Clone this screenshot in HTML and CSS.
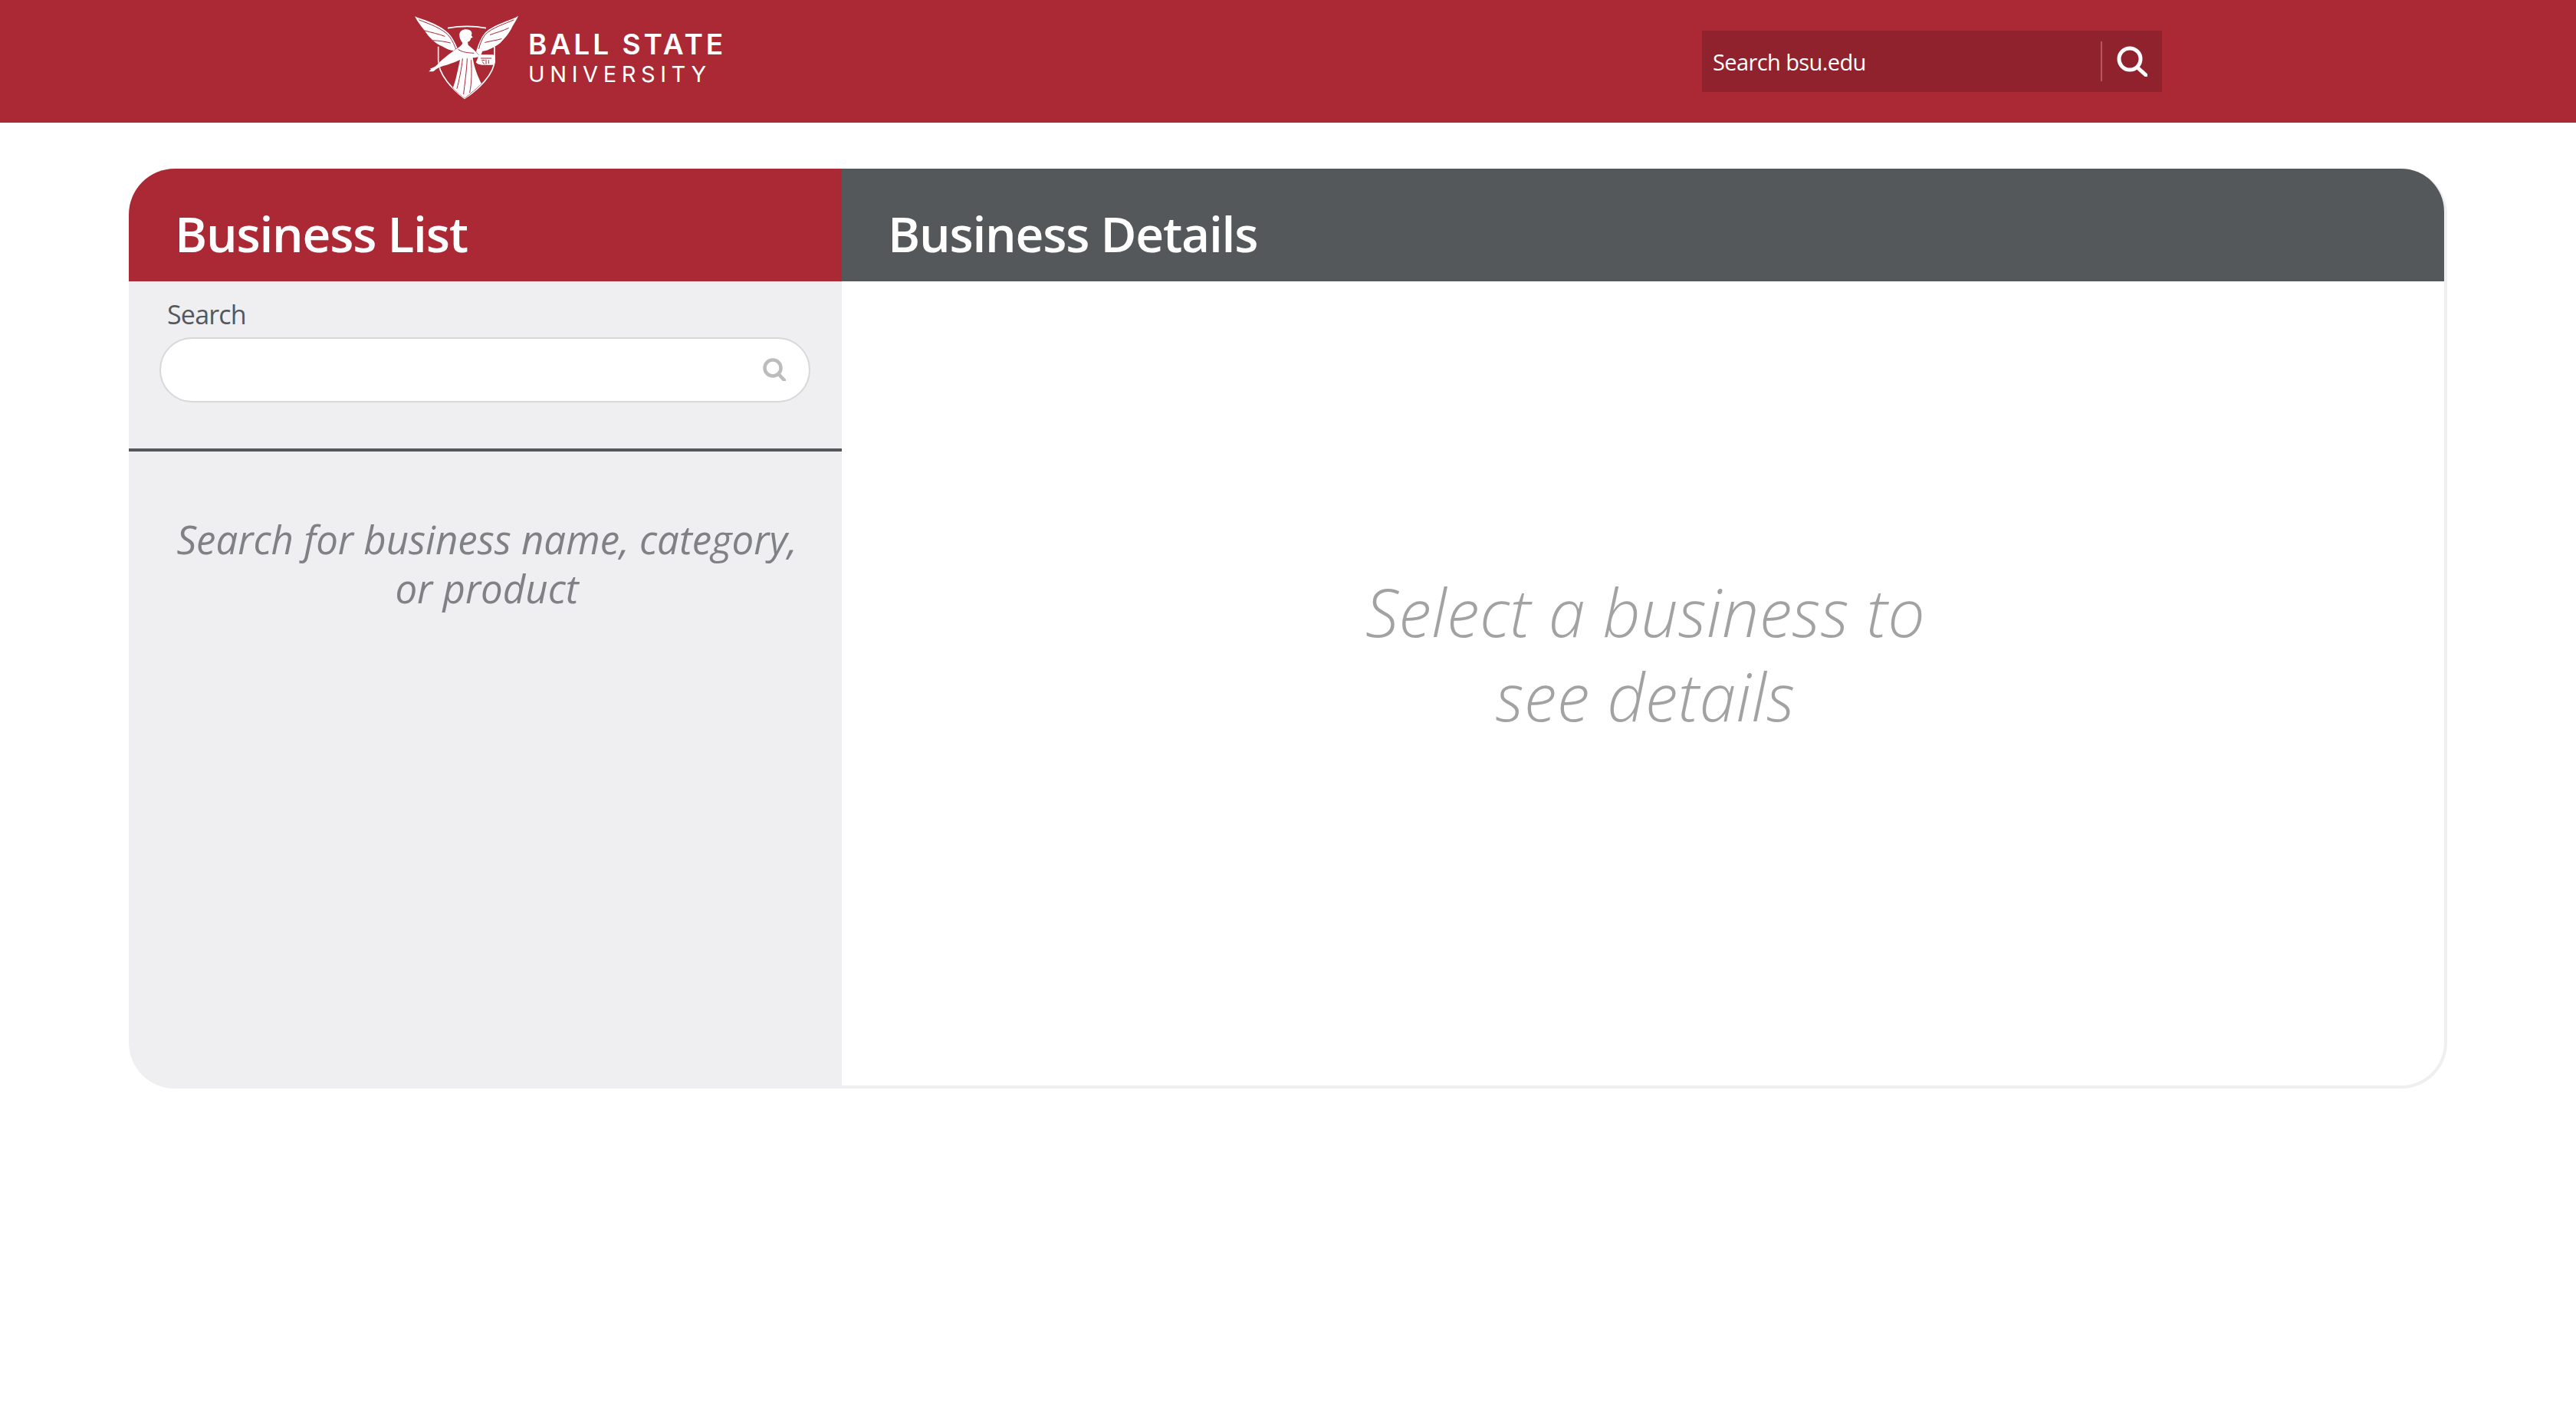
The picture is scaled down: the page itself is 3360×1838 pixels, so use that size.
FILE: index.html
```html
<!DOCTYPE html>
<html lang="en">
<head>
<meta charset="utf-8">
<title>Business List - Ball State University</title>
<link rel="stylesheet" href="styles.css">
</head>
<body>
<header class="topbar">
  <a class="brand" href="#">
    <svg class="seal" viewBox="0 0 480 390" width="160" height="130" aria-hidden="true">
      <path class="seal-line" d="M162 80Q238 66 312 80M125 152V205C125 262 180 320 228 355C280 320 345 262 345 205V152"/>
      <path class="seal-fill" d="M33 34L45 39C85 52 135 70 165 100C185 122 197 150 207 178L190 185L184 168C170 168 155 160 138 150C128 146 118 140 104 128C92 118 80 104 70 88C55 70 42 52 33 34Z"/>
      <path class="seal-fill" d="M438 32L428 38C392 54 340 68 310 96C292 116 280 146 272 178L290 190L298 170C315 170 332 160 350 150C362 144 372 134 382 122C396 108 408 90 416 72C424 58 432 46 438 32Z"/>
      <path class="seal-cut" d="M50 48C90 64 140 80 168 112C180 128 190 150 196 168M420 48C385 64 335 78 308 106C296 122 288 142 284 160"/>
      <path class="seal-cut" d="M72 90C100 98 125 102 150 112M105 128C130 130 150 132 172 138M400 80C375 92 350 98 328 106M372 122C352 128 332 130 308 136"/>
      <path class="seal-halo" d="M208 102C212 86 232 80 248 88C258 94 258 104 254 108L260 116L252 120C252 128 246 134 240 134L242 146C254 156 272 170 282 184L290 190L270 196L260 196C264 230 280 270 294 298C274 316 250 338 228 354C220 346 192 326 182 314C194 286 202 240 210 204C190 214 160 224 138 230C128 234 118 238 108 248C100 252 92 248 88 250C94 244 100 240 92 238C100 236 110 234 120 224C134 208 168 180 198 160C210 152 218 146 220 138C212 128 206 114 208 102Z"/>
      <path class="seal-cut" d="M204 164C222 176 240 176 264 178M220 200C216 240 206 288 198 316M238 200C236 250 228 300 224 338M254 206C256 250 256 296 248 332"/>
      <path class="seal-fill" d="M284 184H336C344 184 348 190 348 198V212C348 220 342 224 336 224H296C288 224 276 220 272 214C278 206 280 194 284 184Z"/>
      <path class="seal-cut thin" d="M292 198H332M296 206H306M312 204V220M322 206V218M298 212L304 220"/>
    </svg>
    <span class="wordmark">
      <span class="wordmark-top">BALL STATE</span>
      <span class="wordmark-bottom">UNIVERSITY</span>
    </span>
  </a>
  <form class="site-search">
    <input class="site-search-input" type="text" placeholder="Search bsu.edu" aria-label="Search bsu.edu">
    <span class="site-search-rule"></span>
    <svg class="site-search-icon" viewBox="0 0 40 40" width="40" height="40" aria-hidden="true">
      <circle cx="17" cy="17" r="14"/>
      <path d="M27 28L38 38"/>
    </svg>
  </form>
</header>
<main class="page">
  <section class="panel">
    <div class="list-col">
      <h2 class="col-title title-red">Business List</h2>
      <div class="list-search">
        <label class="list-label" for="q">Search</label>
        <div class="list-field">
          <input class="list-input" id="q" type="text">
          <svg class="list-icon" viewBox="0 0 30 30" width="30" height="30" aria-hidden="true">
            <circle cx="13" cy="13" r="10.5"/>
            <path d="M20.500 21L28 29"/>
          </svg>
        </div>
      </div>
      <p class="list-hint">Search for business name, category, or product</p>
    </div>
    <div class="detail-col">
      <h2 class="col-title title-gray">Business Details</h2>
      <p class="detail-hint">Select a business to see details</p>
    </div>
  </section>
</main>
</body>
</html>
```
FILE: styles.css
```css
* { box-sizing: border-box; }
html, body { margin: 0; padding: 0; background: #fff; }
body { min-height: 1838px; font-family: "Open Sans", "Liberation Sans", sans-serif; }

.topbar {
  height: 160px;
  background: #ab2835;
  display: flex;
  align-items: center;
  justify-content: space-between;
  padding: 0 540px 0 530px;
}
.brand { display: flex; align-items: flex-start; text-decoration: none; color: #fff; margin-bottom: 10px; }
.seal { display: block; }
.seal-fill { fill: #fff; }
.seal-halo { fill: #fff; stroke: #ab2835; stroke-width: 3; paint-order: stroke; }
.seal-line { fill: none; stroke: #fff; stroke-width: 5; }
.seal-cut { fill: none; stroke: #ab2835; stroke-width: 3; stroke-linecap: round; }
.seal-cut.thin { stroke-width: 3; }
.wordmark { display: flex; flex-direction: column; margin: 26px 0 0 -1px; font-family: Inter, "Liberation Sans", sans-serif; }
.wordmark-top { font-size: 37px; font-weight: 600; line-height: 44px; letter-spacing: 4px; }
.wordmark-bottom { font-size: 29px; font-weight: 400; line-height: 34px; letter-spacing: 6.6px; }

.site-search {
  width: 600px;
  height: 80px;
  background: #8f222d;
  display: flex;
  align-items: center;
}
.site-search-input {
  flex: 1;
  min-width: 0;
  height: 100%;
  border: 0;
  background: transparent;
  padding: 0 0 0 14px;
  font: 400 29px "Open Sans", sans-serif;
  letter-spacing: -0.6px;
  color: #fff;
  outline: none;
}
.site-search-input::placeholder { color: #fff; opacity: 1; }
.site-search-rule { width: 2px; height: 52px; background: #b65560; }
.site-search-icon { margin: 0 19px 0 19px; }
.site-search-icon circle, .site-search-icon path { fill: none; stroke: #fff; stroke-width: 5; stroke-linecap: round; }

.page { padding: 60px 168px 0; }
.panel { display: flex; height: 1200px; }
.list-col {
  width: 930px;
  background: #efeff1;
  border-radius: 60px 0 0 60px;
  overflow: hidden;
}
.detail-col {
  flex: 1;
  min-width: 0;
  border-right: 4px solid #efeff1;
  border-bottom: 4px solid #efeff1;
  border-radius: 0 60px 60px 0;
}
.col-title {
  margin: 0;
  height: 147px;
  padding: 41px 0 0 60px;
  font-size: 64px;
  line-height: 88px;
  font-weight: 600;
  letter-spacing: -1.2px;
  color: #fff;
}
.title-red { background: #ab2835; }
.title-gray { background: #54585a; border-top-right-radius: 56px; }

.list-search { height: 222px; border-bottom: 4px solid #54585a; padding: 20px 41px 0 40px; }
.list-label { display: block; margin-left: 10px; font-size: 34px; line-height: 46px; color: #54585a; letter-spacing: -0.8px; }
.list-field { position: relative; margin-top: 7px; }
.list-input {
  display: block;
  width: 100%;
  height: 85px;
  border: 2px solid #d8d8d8;
  border-radius: 43px;
  background: #fff;
  outline: none;
}
.list-icon { position: absolute; top: 27px; right: 32px; }
.list-icon circle, .list-icon path { fill: none; stroke: #bcbcbc; stroke-width: 4.500; stroke-linecap: round; }

.list-hint {
  margin: 0;
  padding: 82px 46px 0 50px;
  text-align: center;
  font-size: 51px;
  line-height: 64px;
  font-style: italic;
  font-weight: 500;
  letter-spacing: 0;
  color: #808184;
}
.detail-hint {
  width: 800px;
  margin: 0 auto;
  padding: 376px 0 0 6px;
  text-align: center;
  font-size: 86px;
  line-height: 110px;
  font-style: italic;
  font-weight: 300;
  letter-spacing: 0.4px;
  color: #a2a2a2;
}
```
